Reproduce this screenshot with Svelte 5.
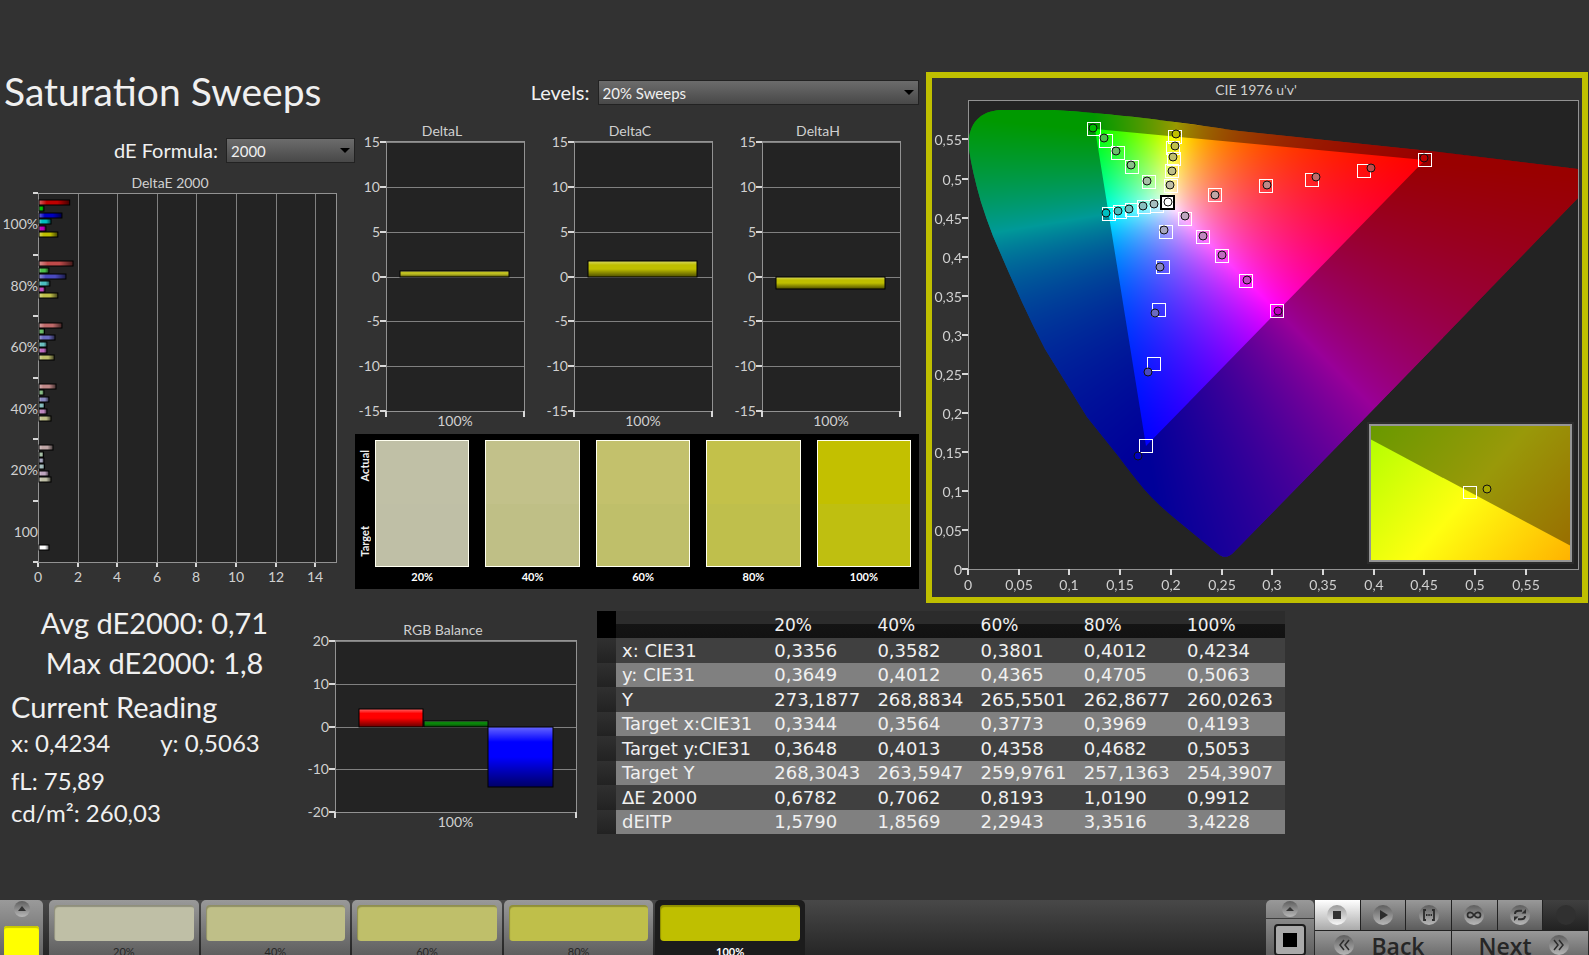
<script lang="ts">
  import { onMount } from "svelte";

  type Point = [number, number];
  type Bar = { from: number; to: number; value: number; color: string };
  type ColumnChart = {
    title: string;
    width: number;
    height: number;
    left: number;
    right: number;
    top: number;
    bottom: number;
    max: number;
    step: number;
    titleX: number;
    bars: Bar[];
  };

  const levels = ["20%", "40%", "60%", "80%", "100%"];
  const hues: Record<string, number[]> = {
    red: [1, 0, 0],
    green: [0, 1, 0],
    blue: [0, 0, 1],
    cyan: [0, 1, 1],
    magenta: [1, 0, 1],
    yellow: [1, 1, 0],
  };
  const hueNames = Object.keys(hues);
  const floors = [166, 136, 106, 74, 0];

  function shade(hue: string, level: number) {
    const c = hues[hue].map((on) => (on ? 191 : floors[level]));
    return `rgb(${c.join(",")})`;
  }

  // Delta E per level, top group first, one value for each hue
  const deltaE = [
    { label: "100%", level: 4, values: [1.6, 0.3, 1.21, 0.66, 0.4, 1.0] },
    { label: "80%", level: 3, values: [1.77, 0.55, 1.41, 0.6, 0.35, 1.0] },
    { label: "60%", level: 2, values: [1.21, 0.33, 0.86, 0.45, 0.45, 0.82] },
    { label: "40%", level: 1, values: [0.91, 0.3, 0.55, 0.33, 0.45, 0.66] },
    { label: "20%", level: 0, values: [0.76, 0.28, 0.3, 0.33, 0.55, 0.66] },
  ];

  const small = { width: 188, height: 312, left: 31, right: 169, top: 19, bottom: 289, max: 15, step: 5, titleX: 87 };
  const deltaCharts: ColumnChart[] = [
    { ...small, title: "DeltaL", bars: [{ from: 45, to: 154, value: 0.6, color: "#bfbf20" }] },
    { ...small, title: "DeltaC", bars: [{ from: 45, to: 154, value: 1.7, color: "#bfbf00" }] },
    { ...small, title: "DeltaH", bars: [{ from: 45, to: 154, value: -1.4, color: "#bfbf00" }] },
  ];
  const balance: ColumnChart = {
    title: "RGB Balance",
    width: 297,
    height: 216,
    left: 35,
    right: 276,
    top: 21,
    bottom: 193,
    max: 20,
    step: 10,
    titleX: 143,
    bars: [
      { from: 59, to: 123, value: 4.2, color: "#ff0000" },
      { from: 124, to: 188, value: 1.4, color: "#0a860a" },
      { from: 188, to: 253, value: -14.2, color: "#0000ff" },
    ],
  };

  function ticks(c: ColumnChart) {
    const out: number[] = [];
    for (let v = c.max; v >= -c.max; v -= c.step) out.push(v);
    return out;
  }

  function valueY(c: ColumnChart, v: number) {
    return Math.round(c.top + 1 + ((c.max - v) / (2 * c.max)) * (c.bottom - c.top - 1));
  }

  // CIE 1976 u'v' plot
  const cie = { left: 36, top: 22, right: 646, bottom: 491, perU: 1014, perV: 781 };
  const cieX = (u: number) => Math.round(cie.left + u * cie.perU);
  const cieY = (v: number) => Math.round(cie.bottom - v * cie.perV);
  const axisSteps = Array.from({ length: 12 }, (_, i) => i * 0.05);
  const comma = (v: number) => String(Math.round(v * 100) / 100).replace(".", ",");

  const locus =
    "M37 71 C35 48 46 33 69 32 L122 32 C190 36 260 46 307 53 L507 74 L646 91 L646 120 L500 271 L432 341 " +
    "L302 474 Q294 483 285 475 L246 443 Q225 426 212 411 Q198 394 187 379 L155 339 L113 271 " +
    "Q101 248 90 224 Q75 191 61 158 Q54 140 49 124 Q40 93 37 71 Z";
  const triangle = `M${cieX(0.125)} 51 L${cieX(0.4507)} 82 L${cieX(0.1754)} ${cieY(0.1579)} Z`;

  const targets: Record<string, Point[]> = {
    green: [[216, 103], [199, 88], [185, 74], [173, 62], [161, 50]],
    yellow: [[238, 107], [239, 92], [241, 80], [240, 69], [242, 58]],
    cyan: [[224, 127], [211, 128], [199, 131], [187, 133], [176, 135]],
    magenta: [[252, 140], [270, 158], [289, 177], [313, 202], [344, 232]],
    blue: [[233, 153], [230, 188], [226, 231], [221, 285], [213, 367]],
    red: [[282, 116], [333, 107], [379, 101], [431, 92], [492, 81]],
  };
  const actuals: Record<string, Point[]> = {
    green: [[215, 103], [199, 87], [184, 73], [172, 60], [161, 50]],
    yellow: [[238, 107], [240, 93], [241, 79], [243, 68], [244, 56]],
    cyan: [[222, 126], [211, 128], [197, 131], [186, 133], [174, 135]],
    magenta: [[253, 138], [271, 158], [290, 177], [315, 202], [346, 233]],
    blue: [[232, 152], [228, 189], [223, 235], [216, 294], [206, 378]],
    red: [[283, 117], [335, 107], [384, 99], [439, 90], [492, 80]],
  };

  let canvas: HTMLCanvasElement;

  onMount(() => {
    const ctx = canvas.getContext("2d")!;
    const { width, height } = canvas;
    const image = ctx.createImageData(width, height);
    for (let py = 0; py < height; py++) {
      for (let px = 0; px < width; px++) {
        const u = px / cie.perU;
        const v = Math.max((height - py) / cie.perV, 0.001);
        const X = (9 * u) / (4 * v);
        const Z = (12 - 3 * u - 20 * v) / (4 * v);
        const r = 3.2406 * X - 1.5372 - 0.4986 * Z;
        const g = -0.9689 * X + 1.8758 + 0.0415 * Z;
        const b = 0.0557 * X - 0.204 + 1.057 * Z;
        const peak = Math.max(r, g, b);
        const i = (py * width + px) * 4;
        image.data[i] = (255 * r) / peak;
        image.data[i + 1] = (255 * g) / peak;
        image.data[i + 2] = (255 * b) / peak;
        image.data[i + 3] = 255;
      }
    }
    ctx.putImageData(image, 0, 0);
  });

  const rows = [
    ["x: CIE31", "0,3356", "0,3582", "0,3801", "0,4012", "0,4234"],
    ["y: CIE31", "0,3649", "0,4012", "0,4365", "0,4705", "0,5063"],
    ["Y", "273,1877", "268,8834", "265,5501", "262,8677", "260,0263"],
    ["Target x:CIE31", "0,3344", "0,3564", "0,3773", "0,3969", "0,4193"],
    ["Target y:CIE31", "0,3648", "0,4013", "0,4358", "0,4682", "0,5053"],
    ["Target Y", "268,3043", "263,5947", "259,9761", "257,1363", "254,3907"],
    ["ΔE 2000", "0,6782", "0,7062", "0,8193", "1,0190", "0,9912"],
    ["dEITP", "1,5790", "1,8569", "2,2943", "3,3516", "3,4228"],
  ];

  const swatches = [
    { actual: "#c0c0a6", target: "#bfbfa6" },
    { actual: "#c2c18a", target: "#bfbf86" },
    { actual: "#c3c16c", target: "#bfbf6a" },
    { actual: "#c3c14a", target: "#bfbf4c" },
    { actual: "#c3c000", target: "#bfbf10" },
  ];

  let formula = $state("2000");
  let sweep = $state("20% Sweeps");
  let selected = $state(4);
</script>

{#snippet columnChart(c: ColumnChart)}
  <svg class="chart" viewBox="0 0 {c.width} {c.height}" role="img" aria-label={c.title}>
    <text x={c.titleX} y={c.top - 5} text-anchor="middle">{c.title}</text>
    <rect class="plot" x={c.left} y={c.top} width={c.right - c.left} height={c.bottom - c.top} />
    {#each ticks(c) as v}
      <line class="grid" x1={c.left} x2={c.right} y1={valueY(c, v)} y2={valueY(c, v)} />
      <line class="tick" x1={c.left - 6} x2={c.left} y1={valueY(c, v)} y2={valueY(c, v)} />
      <text x={c.left - 6} y={valueY(c, v) + 5} text-anchor="end">{v}</text>
    {/each}
    <rect class="frame" x={c.left} y={c.top} width={c.right - c.left} height={c.bottom - c.top} />
    <line class="tick" x1={c.left} x2={c.left} y1={c.bottom} y2={c.bottom + 6} />
    <line class="tick" x1={c.right} x2={c.right} y1={c.bottom} y2={c.bottom + 6} />
    {#each c.bars as b}
      {@const y = Math.min(valueY(c, 0), valueY(c, b.value))}
      {@const h = Math.abs(valueY(c, 0) - valueY(c, b.value))}
      <rect x={b.from} {y} width={b.to - b.from} height={h} fill={b.color} />
      <rect class="bar" x={b.from} {y} width={b.to - b.from} height={h} fill="url(#gloss-down)" />
    {/each}
    <text x={(c.left + c.right) / 2} y={c.bottom + 15} text-anchor="middle">100%</text>
  </svg>
{/snippet}

<div class="app">
  <svg class="defs" aria-hidden="true">
    <defs>
      <linearGradient id="gloss-down" x1="0" y1="0" x2="0" y2="1">
        <stop offset="0" stop-color="#fff" stop-opacity="0.4" />
        <stop offset="0.25" stop-color="#fff" stop-opacity="0" />
        <stop offset="0.5" stop-color="#000" stop-opacity="0" />
        <stop offset="1" stop-color="#000" stop-opacity="0.6" />
      </linearGradient>
      <linearGradient id="gloss-right" x1="0" y1="0" x2="1" y2="0">
        <stop offset="0" stop-color="#fff" stop-opacity="0.4" />
        <stop offset="0.25" stop-color="#fff" stop-opacity="0" />
        <stop offset="0.6" stop-color="#000" stop-opacity="0" />
        <stop offset="1" stop-color="#000" stop-opacity="0.65" />
      </linearGradient>
      <linearGradient id="disc" x1="0" y1="0" x2="0" y2="1">
        <stop offset="0" stop-color="#5e5e5e" />
        <stop offset="1" stop-color="#b8b8b8" />
      </linearGradient>
      <linearGradient id="disc-light" x1="0" y1="0" x2="0" y2="1">
        <stop offset="0" stop-color="#9a9a9a" />
        <stop offset="1" stop-color="#f8f8f8" />
      </linearGradient>
    </defs>
  </svg>

  <main>
    <div class="upper">
      <section class="overview">
        <h1>Saturation Sweeps</h1>
        <div class="field formula">
          <label for="formula">dE Formula:</label>
          <span class="select">
            <select id="formula" bind:value={formula}>
              <option>2000</option>
            </select>
          </span>
        </div>
        <svg class="chart" viewBox="0 0 355 427" role="img" aria-label="DeltaE 2000">
          <text x="170" y="17" text-anchor="middle">DeltaE 2000</text>
          <rect class="plot" x="38" y="22" width="298" height="369" />
          {#each [0, 2, 4, 6, 8, 10, 12, 14] as v}
            {@const x = Math.round(38 + v * 19.8)}
            <line class="grid" x1={x} x2={x} y1="22" y2="391" />
            <line class="tick" x1={x} x2={x} y1="391" y2="396" />
            <text {x} y="411" text-anchor="middle">{v}</text>
          {/each}
          <rect class="frame" x="38" y="22" width="298" height="369" />
          {#each [0, 1, 2, 3, 4, 5, 6] as i}
            <line class="tick" x1="33" x2="38" y1={Math.round(22 + i * 61.5)} y2={Math.round(22 + i * 61.5)} />
          {/each}
          {#each deltaE as group, g}
            <text x="38" y={Math.round(58 + g * 61.5)} text-anchor="end">{group.label}</text>
            {#each group.values as v, i}
              {@const y = Math.round(29 + g * 61.3 + i * 6.4)}
              <rect x="39" {y} width={v * 19.8 - 1} height="5" fill={shade(hueNames[i], group.level)} />
              <rect class="bar" x="39" {y} width={v * 19.8 - 1} height="5" fill="url(#gloss-right)" />
            {/each}
          {/each}
          <text x="38" y="366" text-anchor="end">100</text>
          <rect x="39" y="374" width="10" height="5" fill="#fff" />
          <rect class="bar" x="39" y="374" width="10" height="5" fill="url(#gloss-right)" />
        </svg>
      </section>

      <section class="sweeps">
        <div class="field levels">
          <label for="levels">Levels:</label>
          <span class="select">
            <select id="levels" bind:value={sweep}>
              <option>20% Sweeps</option>
            </select>
          </span>
        </div>
        <div class="deltas">
          {#each deltaCharts as chart}
            {@render columnChart(chart)}
          {/each}
        </div>
        <div class="swatches">
          <div class="sides">
            <span>Actual</span>
            <span>Target</span>
          </div>
          {#each swatches as s, i}
            <figure>
              <div class="swatch">
                <div style:background={s.actual}></div>
                <div style:background={s.target}></div>
              </div>
              <figcaption>{levels[i]}</figcaption>
            </figure>
          {/each}
        </div>
      </section>

      <section class="cie">
        <svg class="chart" viewBox="0 0 650 519" role="img" aria-label="CIE 1976 u'v'">
          <defs>
            <clipPath id="locus"><path d={locus} /></clipPath>
            <linearGradient id="zoom" gradientUnits="userSpaceOnUse" x1="438" y1="348" x2="618" y2="506">
              <stop offset="0" stop-color="#aeff00" />
              <stop offset="0.5" stop-color="#ffff10" />
              <stop offset="1" stop-color="#ffb200" />
            </linearGradient>
          </defs>
          <text x="324" y="17" text-anchor="middle">CIE 1976 u'v'</text>
          <rect class="plot" x="36" y="22" width="610" height="469" />
          <g clip-path="url(#locus)">
            <foreignObject x="36" y="22" width="610" height="469">
              <canvas bind:this={canvas} width="610" height="469"></canvas>
            </foreignObject>
            <path d="M36 22 H646 V491 H36 Z {triangle}" fill-rule="evenodd" fill="#000" fill-opacity="0.4" />
          </g>
          <rect class="frame" x="36" y="22" width="610" height="469" />
          {#each axisSteps as v}
            <line class="tick" x1={cieX(v)} x2={cieX(v)} y1="491" y2="497" />
            <text x={cieX(v)} y="512" text-anchor="middle">{comma(v)}</text>
            <line class="tick" x1="30" x2="36" y1={cieY(v)} y2={cieY(v)} />
            <text x="30" y={cieY(v) + 6} text-anchor="end">{comma(v)}</text>
          {/each}
          {#each hueNames as hue}
            {#each targets[hue] as [x, y]}
              <rect class="target" x={x - 6} y={y - 6} width="13" height="13" />
            {/each}
          {/each}
          {#each hueNames as hue}
            {#each actuals[hue] as [x, y], i}
              <circle class="actual" cx={x} cy={y} r="4" fill={shade(hue, i)} />
            {/each}
          {/each}
          <rect class="white-target" x="229" y="118" width="13" height="13" />
          <circle class="actual" cx="236" cy="124" r="4" fill="#fff" />

          <rect x="435" y="344" width="207" height="142" fill="#2c2c2c" />
          <rect x="438" y="347" width="201" height="136" fill="url(#zoom)" />
          <path d="M438 347 H639 V468 L438 361 Z" fill="#000" fill-opacity="0.4" />
          <rect class="zoom-frame" x="438" y="347" width="201" height="136" />
          <rect class="target" x="531" y="408" width="13" height="12" />
          <circle class="actual" cx="555" cy="411" r="4" fill="#a8a800" />
        </svg>
      </section>
    </div>

    <div class="lower">
      <section class="readings">
        <p class="big center">Avg dE2000: 0,71</p>
        <p class="big center">Max dE2000: 1,8</p>
        <h2 class="big">Current Reading</h2>
        <p class="pair"><span>x: 0,4234</span><span>y: 0,5063</span></p>
        <p class="fl">fL: 75,89</p>
        <p>cd/m²: 260,03</p>
      </section>

      <section class="balance">
        {@render columnChart(balance)}
      </section>

      <table>
        <thead>
          <tr>
            <td class="handle"></td>
            <td></td>
            {#each levels as level}
              <th scope="col">{level}</th>
            {/each}
          </tr>
        </thead>
        <tbody>
          {#each rows as [name, ...values]}
            <tr>
              <td class="handle"></td>
              <th scope="row">{name}</th>
              {#each values as value}
                <td>{value}</td>
              {/each}
            </tr>
          {/each}
        </tbody>
      </table>
    </div>
  </main>

  <footer>
    <div class="current">
      <button class="lift" aria-label="Expand patches">
        <svg width="16" height="16" viewBox="0 0 16 16">
          <circle cx="8" cy="8" r="8" fill="url(#disc)" />
          <path d="M4 10 L8 5 L12 10 Z" fill="#333" />
        </svg>
      </button>
      <div class="patch"></div>
    </div>
    <div class="tabs">
      {#each levels as level, i}
        <button class="tab" class:active={selected === i} onclick={() => (selected = i)}>
          <span class="chip" style:background={shade("yellow", i)}></span>
          <span>{level}</span>
        </button>
      {/each}
    </div>
    <div class="controls">
      <div class="side">
        <button class="lift" aria-label="Expand controls">
          <svg width="16" height="16" viewBox="0 0 16 16">
            <circle cx="8" cy="8" r="8" fill="url(#disc)" />
            <path d="M4 10 L8 6 L12 10 Z" fill="#333" />
          </svg>
        </button>
        <button class="screen" aria-label="Pattern window">
          <svg width="32" height="32" viewBox="0 0 32 32">
            <rect x="1" y="1" width="30" height="30" rx="3" fill="#aaa" stroke="#1c1c1c" stroke-width="2" />
            <rect x="9" y="9" width="14" height="14" fill="#000" />
          </svg>
        </button>
      </div>
      <div class="transport">
        <button class="light" aria-label="Stop">
          <svg width="22" height="22" viewBox="0 0 22 22">
            <circle cx="11" cy="11" r="10" fill="url(#disc-light)" />
            <rect x="7" y="7" width="8" height="8" fill="#333" />
          </svg>
        </button>
        <button aria-label="Play">
          <svg width="22" height="22" viewBox="0 0 22 22">
            <circle cx="11" cy="11" r="10" fill="url(#disc)" />
            <path d="M8 6 L16 11 L8 16 Z" fill="#2c2c2c" />
          </svg>
        </button>
        <button aria-label="Play range">
          <svg width="22" height="22" viewBox="0 0 22 22">
            <circle cx="11" cy="11" r="10" fill="url(#disc)" />
            <path d="M8 6 H6 V16 H8 M14 6 H16 V16 H14 M8 11 H9.5 M10.3 11 H11.8 M12.6 11 H14" fill="none" stroke="#2c2c2c" stroke-width="1.8" />
          </svg>
        </button>
        <button aria-label="Continuous">
          <svg width="22" height="22" viewBox="0 0 22 22">
            <circle cx="11" cy="11" r="10" fill="url(#disc)" />
            <path d="M11 11 C9.5 9 8.5 8.3 7.2 8.3 C5.5 8.3 4.5 9.5 4.5 11 C4.5 12.5 5.5 13.7 7.2 13.7 C8.5 13.7 9.5 13 11 11 C12.5 9 13.5 8.3 14.8 8.3 C16.5 8.3 17.5 9.5 17.5 11 C17.5 12.5 16.5 13.7 14.8 13.7 C13.5 13.7 12.5 13 11 11 Z" fill="none" stroke="#2c2c2c" stroke-width="1.7" />
          </svg>
        </button>
        <button aria-label="Repeat">
          <svg width="22" height="22" viewBox="0 0 22 22">
            <circle cx="11" cy="11" r="10" fill="url(#disc)" />
            <path d="M6 10 C6 7.5 8 6.8 10 6.8 H13 M16 12 C16 14.5 14 15.2 12 15.2 H9" fill="none" stroke="#2c2c2c" stroke-width="2" />
            <path d="M12.5 9.5 H17 V5 Z M9.5 12.5 H5 V17 Z" fill="#2c2c2c" />
          </svg>
        </button>
        <button class="off" aria-label="Record" disabled>
          <svg width="22" height="22" viewBox="0 0 22 22">
            <circle cx="11" cy="11" r="10" fill="#303030" />
          </svg>
        </button>
        <button class="nav back">
          <svg width="22" height="22" viewBox="0 0 22 22" aria-hidden="true">
            <circle cx="11" cy="11" r="10" fill="url(#disc)" />
            <path d="M11 6 L7 11 L11 16 M16 6 L12 11 L16 16" fill="none" stroke="#2c2c2c" stroke-width="1.5" />
          </svg>
          Back
        </button>
        <button class="nav next">
          Next
          <svg width="22" height="22" viewBox="0 0 22 22" aria-hidden="true">
            <circle cx="11" cy="11" r="10" fill="url(#disc)" />
            <path d="M6 6 L10 11 L6 16 M11 6 L15 11 L11 16" fill="none" stroke="#2c2c2c" stroke-width="1.5" />
          </svg>
        </button>
      </div>
    </div>
  </footer>
</div>

<style>
  :global(body) {
    background: #323232;
  }

  .app {
    display: flex;
    flex-direction: column;
    height: 100vh;
    overflow: hidden;
    color: #f0f0f0;
    background: #323232;
    font-family: Lato, "Liberation Sans", sans-serif;
  }

  .defs {
    position: absolute;
    width: 0;
    height: 0;
  }

  main {
    flex: 1;
    min-height: 0;
    overflow: hidden;
    padding-top: 72px;
  }

  h1,
  h2,
  p,
  figure {
    margin: 0;
    font-weight: 400;
  }

  button {
    padding: 0;
    border: 0;
    font-family: inherit;
  }

  .upper {
    display: grid;
    grid-template-columns: minmax(0, 355fr) minmax(0, 571fr) minmax(0, 662fr);
    align-items: start;
    padding-right: 1px;
  }

  .sweeps {
    padding-right: 7px;
  }

  h1 {
    padding: 0 4px;
    font-size: 39px;
    line-height: 38px;
    white-space: nowrap;
  }

  .field {
    display: flex;
    align-items: center;
    justify-content: flex-end;
    gap: 8px;
    font-size: 20px;
    line-height: 25px;
  }

  .formula {
    margin-top: 28px;
    margin-bottom: 8px;
  }

  .formula .select {
    width: 129px;
  }

  .levels {
    padding-top: 8px;
    margin-bottom: 17px;
  }

  .levels .select {
    width: 57%;
  }

  .select {
    position: relative;
  }

  .select::after {
    content: "";
    position: absolute;
    top: 10px;
    right: 5px;
    border: 5px solid transparent;
    border-top-color: #000;
    pointer-events: none;
  }

  select {
    display: block;
    width: 100%;
    height: 25px;
    padding: 0 4px;
    appearance: none;
    border: 1px solid #222;
    border-radius: 0;
    background: linear-gradient(#6c6c6c, #484848);
    color: #f0f0f0;
    font-family: inherit;
    font-size: 15px;
  }

  .chart {
    display: block;
    width: 100%;
    height: auto;
    font-size: 14px;
  }

  .chart text {
    fill: #d0d0d0;
  }

  .plot {
    fill: #232323;
  }

  .frame {
    fill: none;
    stroke: #929292;
    shape-rendering: crispEdges;
  }

  .grid {
    stroke: #808080;
    shape-rendering: crispEdges;
  }

  .tick {
    stroke: #d8d8d8;
    stroke-width: 2;
    shape-rendering: crispEdges;
  }

  .bar {
    stroke: #000;
  }

  .target {
    fill: none;
    stroke: #fff;
    stroke-width: 1;
    shape-rendering: crispEdges;
  }

  .white-target {
    fill: #fff;
    stroke: #000;
    stroke-width: 2;
  }

  .actual {
    stroke: #111;
    stroke-width: 1;
  }

  .zoom-frame {
    fill: none;
    stroke: #959595;
    stroke-width: 2;
  }

  canvas {
    display: block;
  }

  .deltas {
    display: grid;
    grid-template-columns: repeat(3, minmax(0, 1fr));
  }

  .swatches {
    display: flex;
    gap: 16px;
    padding: 6px 8px 4px 0;
    background: #000;
  }

  .sides {
    display: flex;
    flex-direction: column;
    justify-content: space-between;
    align-items: center;
    box-sizing: border-box;
    width: 20px;
    height: 127px;
    margin-right: -16px;
    padding: 10px 0;
    font-size: 11px;
    font-weight: 700;
    line-height: 16px;
  }

  .sides span {
    writing-mode: vertical-rl;
    rotate: 180deg;
  }

  figure {
    flex: 1;
    text-align: center;
  }

  .swatch {
    display: grid;
    grid-template-rows: 1fr 1fr;
    box-sizing: border-box;
    height: 127px;
    border: 1px solid #fffff0;
  }

  figcaption {
    padding-top: 2px;
    color: #fff;
    font-size: 11px;
    font-weight: 700;
    line-height: 16px;
  }

  .cie {
    border: 6px solid #bfbf00;
  }

  .lower {
    display: grid;
    grid-template-columns: minmax(0, 300fr) minmax(0, 297fr) minmax(0, 688fr) minmax(0, 304fr);
    align-items: start;
  }

  .readings {
    padding-left: 11px;
    font-size: 24px;
    line-height: 32px;
  }

  .big {
    font-size: 29px;
    line-height: 40px;
  }

  .center {
    padding-right: 2px;
    text-align: center;
  }

  .pair {
    display: flex;
    gap: 50px;
  }

  .fl {
    margin-top: 6px;
  }

  h2.big {
    margin-top: 4px;
  }

  .balance {
    padding-top: 16px;
  }

  table {
    width: 100%;
    margin-top: 8px;
    border-collapse: collapse;
    table-layout: fixed;
    font-family: "DejaVu Sans", sans-serif;
    font-size: 18px;
    line-height: 20px;
  }

  td,
  th {
    padding: 0;
    font-weight: 400;
    text-align: left;
    white-space: nowrap;
  }

  thead th {
    width: 15%;
    font-size: 17px;
  }

  thead th:last-child {
    width: auto;
  }

  thead td:nth-child(2) {
    width: 23%;
  }

  thead tr {
    height: 27px;
    background: linear-gradient(#2c2c2c, #2c2c2c 50%, #141414 50%, #121212);
  }

  tbody tr {
    height: 25px;
    background: #404040;
  }

  tbody tr:nth-child(even) {
    height: 24px;
    background: #808080;
  }

  tbody th {
    padding-left: 6px;
  }

  .handle {
    width: 19px;
    background: linear-gradient(#303030, #222);
  }

  thead .handle {
    background: #000;
  }

  footer {
    display: flex;
    align-items: flex-start;
    height: 55px;
    overflow: hidden;
    background: linear-gradient(#484848, #262626);
  }

  .current {
    width: 43px;
    height: 64px;
    border-radius: 0 5px 0 0;
    background: linear-gradient(#9a9a9a, #5c5c5c);
  }

  .lift {
    display: grid;
    place-items: center;
    width: 100%;
    height: 18px;
    background: none;
  }

  .patch {
    height: 36px;
    margin: 8px 4px;
    border-radius: 3px;
    background: #ff0;
    box-shadow: inset 0 2px 1px #c8c800;
  }

  .tabs {
    display: grid;
    grid-template-columns: repeat(5, 1fr);
    gap: 2px;
    width: 756px;
    margin-left: 6px;
  }

  .tab {
    display: flex;
    flex-direction: column;
    height: 64px;
    padding: 5px 5px 0;
    border-radius: 5px 5px 0 0;
    background: linear-gradient(#999, #555);
    color: #262626;
    font-size: 11px;
    line-height: 14px;
  }

  .tab.active {
    background: #1c1c1c;
    color: #fff;
    font-weight: 700;
  }

  .chip {
    display: block;
    height: 36px;
    margin-bottom: 4px;
    border-radius: 4px;
    box-shadow: inset 1px 2px 1px rgba(0, 0, 0, 0.25);
  }

  .controls {
    display: flex;
    gap: 1px;
    margin-left: auto;
    padding-right: 1px;
  }

  .side {
    width: 48px;
  }

  .side .lift {
    border-radius: 5px 5px 0 0;
    background: linear-gradient(#999, #808080);
  }

  .screen {
    display: grid;
    justify-content: center;
    align-content: start;
    width: 100%;
    height: 46px;
    margin-top: 1px;
    padding-top: 5px;
    background: linear-gradient(#888, #555);
  }

  .transport {
    display: grid;
    grid-template-columns: repeat(6, 1fr);
    grid-template-rows: 30px 34px;
    gap: 1px;
    width: 273px;
    background: #222;
  }

  .transport button {
    display: flex;
    align-items: center;
    justify-content: center;
    background: linear-gradient(#999, #5c5c5c);
  }

  .transport .light {
    background: linear-gradient(#fff, #aaa);
  }

  .transport .off {
    background: linear-gradient(#404040, #222);
  }

  .transport .nav {
    grid-column: span 3;
    align-items: flex-start;
    gap: 16px;
    padding-top: 3px;
    color: #262626;
    font-family: "Open Sans", sans-serif;
    font-size: 23px;
    font-weight: 600;
    line-height: 24px;
  }

  .transport .back {
    padding-right: 8px;
  }

  .transport .next {
    padding-left: 8px;
  }
</style>
